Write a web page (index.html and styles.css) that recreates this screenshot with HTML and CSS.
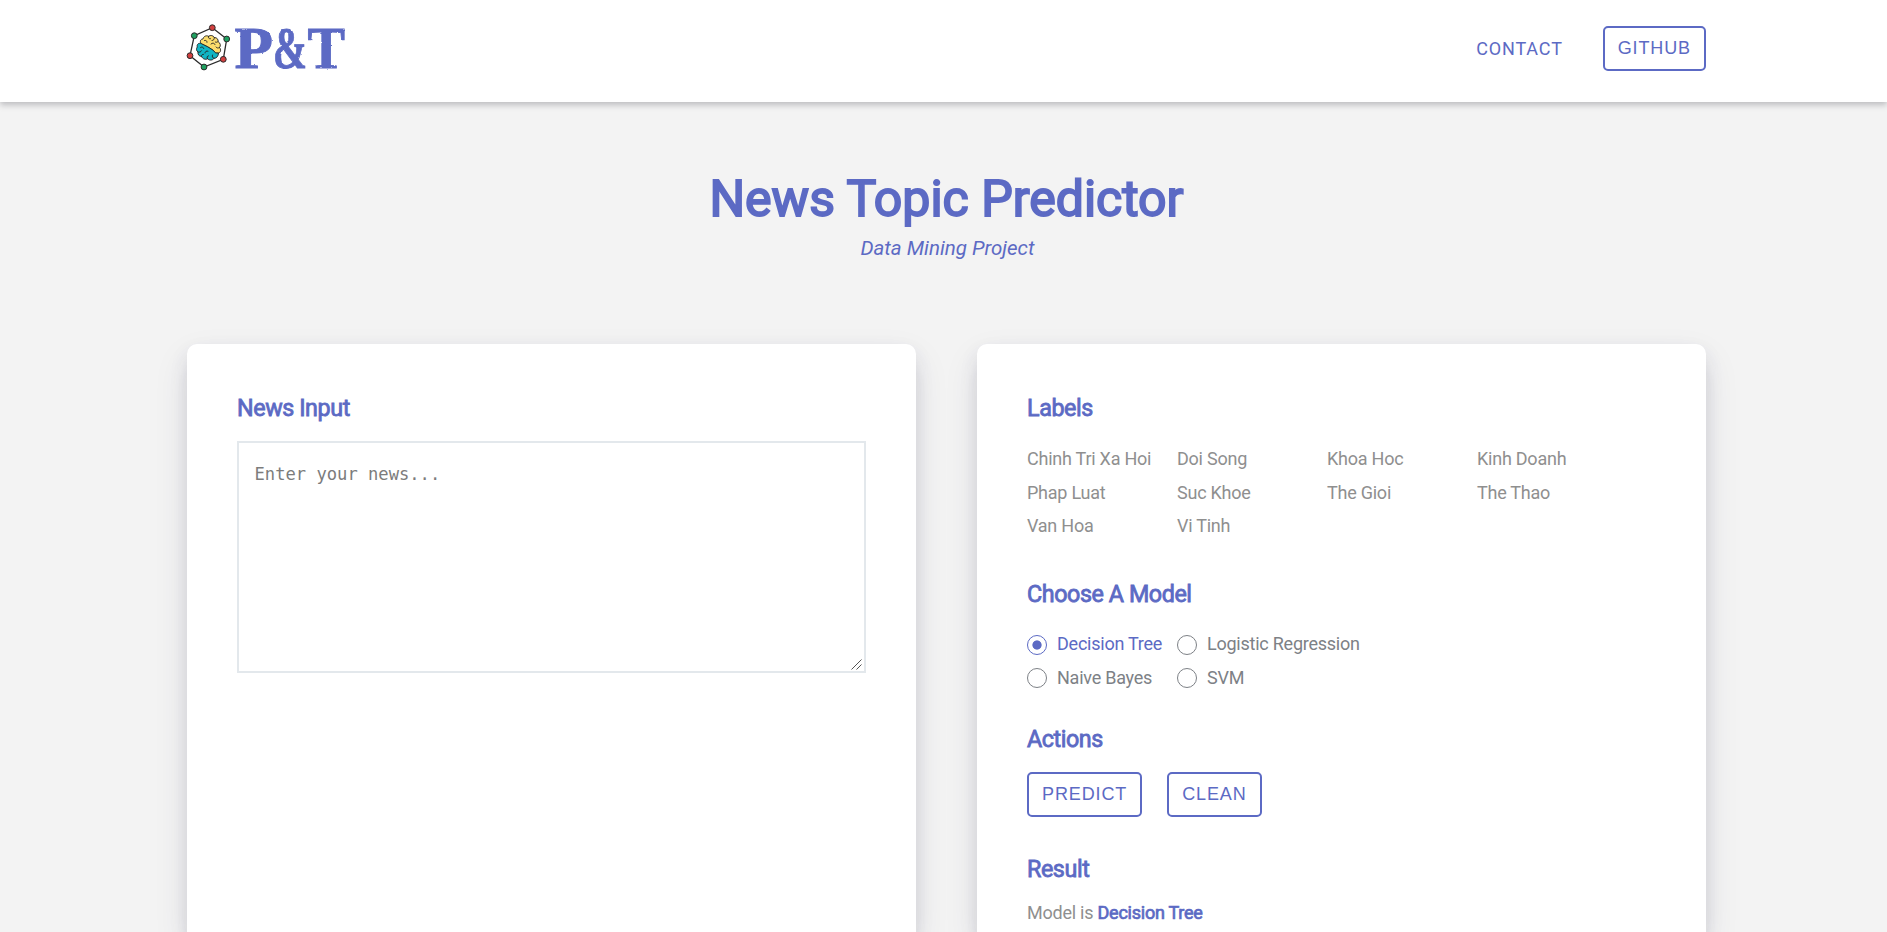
FILE: index.html
```
<!DOCTYPE html>
<html lang="en">
<head>
<meta charset="utf-8">
<title>News Topic Predictor</title>
<link rel="stylesheet" href="styles.css">
</head>
<body>
<header class="header">
  <div class="container header-row">
    <a class="logo" href="#">
      <svg class="logo-svg" width="162" height="52" viewBox="0 0 162 52">
        <defs>
          <filter id="rough" x="-5%" y="-5%" width="110%" height="110%">
            <feTurbulence type="fractalNoise" baseFrequency="0.3" numOctaves="2" seed="4" result="n"/>
            <feDisplacementMap in="SourceGraphic" in2="n" scale="2" xChannelSelector="R" yChannelSelector="G"/>
          </filter>
        </defs>
        <path d="M25.300 5.700 39.700 17 36.300 37.300 17 45 3 33.700 7.300 13.700Z" fill="none" stroke="#2b2b2b" stroke-width="1.300"/>
        <g stroke="#2b2b2b" stroke-width="1">
          <circle cx="25.300" cy="5.700" r="2.900" fill="#d23f3f"/>
          <circle cx="39.700" cy="17" r="2.900" fill="#1fa060"/>
          <circle cx="36.300" cy="37.300" r="2.900" fill="#d23f3f"/>
          <circle cx="17" cy="45" r="2.900" fill="#1fa060"/>
          <circle cx="3" cy="33.700" r="2.900" fill="#d23f3f"/>
          <circle cx="7.300" cy="13.700" r="2.900" fill="#1fa060"/>
        </g>
        <g stroke="#222" stroke-width=".9" stroke-linejoin="round" stroke-linecap="round">
          <path d="M14 21.500C12.500 19.500 13.500 17 16 17 16.500 14.500 19 13 21.500 14.300 23.500 12.800 26.500 13.500 27.300 15.500 30 15.500 31.500 17.500 31 19.500 33.500 21 34 24 32.500 25.500 34.300 27.500 33.800 30.500 31.500 31 29 31.500 27.500 30.500 26.500 28.500L21 25Z" fill="#fbdc6c"/>
          <path d="M14 21.500C11.500 20.500 9.500 22.500 10.300 25 9 26.500 9.300 29 11 30 10.500 32.500 12.300 34.500 14.500 34.300 15.500 37 18.500 38 20.500 36.800 22.500 38.800 26 38.300 27 36.300 29.500 36.500 31.500 34 31.500 31 29 31.500 27.500 30.500 26.500 28.500L21 25Z" fill="#10b5c4"/>
          <path d="M17.500 18.500C19 18 20 18.800 20 20.300M21.500 14.300C21 16 22 17 23.500 16.800M27.300 15.500C27.500 17.500 26.500 18.500 25 18.500M24 22C25.500 20.500 27.500 21 28 22.500M31 19.500C30 20.500 29 20.500 28.300 20M32.500 25.500C31 26.500 29.500 26 29 25M13.500 25.500C14.500 24.500 16.500 25 16.800 26.500M11 30C12.500 30.500 14 30 14.500 28.800M18 31C18 29.500 19.500 28.500 21 29.200M14.500 34.300C14.300 33 15.300 32 16.500 32.300M20.500 36.800C19.500 35.500 20 34 21.500 33.800M27 36.300C25.500 36 24.800 34.500 25.500 33" fill="none"/>
        </g>
        <g class="logo-text" filter="url(#rough)">
          <text x="47.500" y="45.500" textLength="38.500" lengthAdjust="spacingAndGlyphs">P</text>
          <text x="86" y="45.500" textLength="34" lengthAdjust="spacingAndGlyphs">&amp;</text>
          <text x="120.500" y="45.500" textLength="37.500" lengthAdjust="spacingAndGlyphs">T</text>
        </g>
      </svg>
    </a>
    <nav class="nav">
      <a class="nav-link" href="#">CONTACT</a>
      <button class="btn" type="button">GITHUB</button>
    </nav>
  </div>
</header>
<main class="container">
  <section class="hero">
    <h1 class="hero-title">News Topic Predictor</h1>
    <p class="hero-sub">Data Mining Project</p>
  </section>
  <div class="cards">
    <section class="card">
      <h2 class="heading">News Input</h2>
      <div class="news-box">
        <textarea class="news" placeholder="Enter your news..."></textarea>
        <svg class="grip" width="12" height="12" viewBox="0 0 12 12"><path d="M.5 11.500 10.500 1.500M5.500 11.500 10.500 6.500" stroke="#555" stroke-width="1"/></svg>
      </div>
    </section>
    <section class="card">
      <h2 class="heading">Labels</h2>
      <ul class="labels">
        <li>Chinh Tri Xa Hoi</li><li>Doi Song</li><li>Khoa Hoc</li><li>Kinh Doanh</li>
        <li>Phap Luat</li><li>Suc Khoe</li><li>The Gioi</li><li>The Thao</li>
        <li>Van Hoa</li><li>Vi Tinh</li>
      </ul>
      <h2 class="heading">Choose A Model</h2>
      <div class="models">
        <label class="model model-on"><input class="radio" type="radio" name="model" checked>Decision Tree</label>
        <label class="model"><input class="radio" type="radio" name="model">Logistic Regression</label>
        <label class="model"><input class="radio" type="radio" name="model">Naive Bayes</label>
        <label class="model"><input class="radio" type="radio" name="model">SVM</label>
      </div>
      <h2 class="heading">Actions</h2>
      <div class="actions">
        <button class="btn" type="button">PREDICT</button>
        <button class="btn" type="button">CLEAN</button>
      </div>
      <h2 class="heading">Result</h2>
      <p class="result">Model is <span class="result-model">Decision Tree</span></p>
    </section>
  </div>
</main>
</body>
</html>
```
FILE: styles.css
```
* { box-sizing: border-box; }
html, body { height: 100%; }
body {
  margin: 0;
  overflow: hidden;
  background: #f3f3f3;
  color: #8f8f8f;
  font: 400 18px/33.5px Roboto, sans-serif;
  letter-spacing: -.24px;
}
h1, h2, p, ul { margin: 0; padding: 0; font-weight: 400; }
.container { width: 1519px; margin-left: 187px; }

.header {
  height: 102px;
  background: #fff;
  box-shadow: 0 3px 6px rgba(50, 50, 60, .28);
}
.header-row { display: flex; justify-content: space-between; padding-top: 22px; }
.logo { display: block; height: 52px; }
.logo-svg { display: block; overflow: visible; }
.logo-text {
  font: bold 58.5px "Liberation Serif", serif;
  letter-spacing: 0;
  fill: #5c6ac4;
  stroke: #5c6ac4;
  stroke-width: .9px;
}
.nav { display: flex; align-items: flex-start; gap: 40px; padding-top: 4px; }
.nav-link {
  color: #5c6ac4;
  line-height: 45px;
  letter-spacing: .85px;
  text-decoration: none;
}
.btn {
  height: 45px;
  padding: 0 13px 1px;
  border: 2px solid #5c6ac4;
  border-radius: 5px;
  background: #fff;
  color: #5c6ac4;
  font: 18px/40px "Liberation Sans", Arial, sans-serif;
  letter-spacing: .88px;
}

.hero { padding-top: 67px; height: 242px; text-align: center; color: #5c6ac4; }
.hero-title {
  font-size: 50px;
  line-height: 60px;
  letter-spacing: 0;
  -webkit-text-stroke: 1.9px #5c6ac4;
}
.hero-sub {
  margin-top: 4px;
  padding-left: 2px;
  font-size: 20.5px;
  font-style: italic;
  line-height: 30px;
  letter-spacing: 0;
}

.cards { display: grid; grid-template-columns: 729px 729px; gap: 61px; }
.card {
  height: 588px;
  padding: 48px 50px 0;
  border-radius: 10px 10px 0 0;
  background: #fff;
  box-shadow: 0 15px 35px rgba(50, 50, 93, .1), 0 25px 15px rgba(0, 0, 0, .03), 0 8px 18px rgba(50, 50, 93, .1);
}
.heading {
  padding-top: 1px;
  color: #5c6ac4;
  font-size: 23.3px;
  line-height: 31px;
  letter-spacing: -.42px;
  -webkit-text-stroke: .8px #5c6ac4;
}
.news-box { position: relative; margin-top: 17px; }
.news {
  display: block;
  width: 100%;
  height: 232px;
  padding: 21px 15.5px;
  border: 2px solid #e3e8ec;
  border-radius: 0;
  outline: 0;
  resize: none;
  font: 17.15px "DejaVu Sans Mono", monospace;
  letter-spacing: 0;
}
.news::placeholder { color: #7c7c7c; }
.grip { position: absolute; right: 3px; bottom: 3px; }
.labels {
  display: grid;
  grid-template-columns: repeat(4, 150px);
  margin: 18px 0 35.5px;
  list-style: none;
}
.models { display: grid; grid-template-columns: repeat(2, 150px); margin: 17px 0 29px; }
.model {
  display: flex;
  align-items: center;
  gap: 10px;
  color: #7d8186;
  white-space: nowrap;
}
.model-on { color: #5c6ac4; }
.radio {
  appearance: none;
  flex: none;
  width: 20px;
  height: 20px;
  margin: 1.5px 0 0;
  border: 1px solid #7d8186;
  border-radius: 50%;
  background: #fff;
}
.radio:checked {
  border-color: #5c6ac4;
  background: radial-gradient(circle, #5c6ac4 4.2px, #fff 5px);
}
.actions { display: flex; gap: 25px; margin: 17px 0 36px; }
.result { margin-top: 11px; }
.result-model { color: #5c6ac4; -webkit-text-stroke: .7px #5c6ac4; }
```
